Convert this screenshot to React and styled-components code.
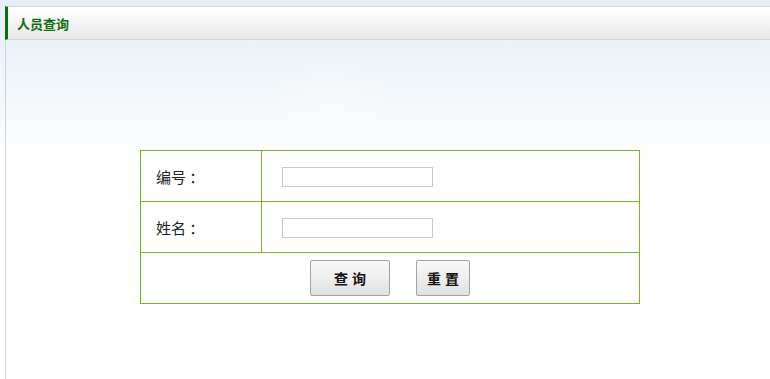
import React from 'react';
import styled, { createGlobalStyle } from 'styled-components';

const GlobalStyle = createGlobalStyle`
    html, body {
        margin: 0;
        padding: 0;
        background: #fff;
        font-family: "Liberation Sans", "Noto Sans CJK SC", sans-serif;
    }
`;

const Page = styled.div`
    width: 770px;
    height: 379px;
    box-sizing: border-box;
    padding: 6px 0 0 5px;
    background:
        radial-gradient(ellipse 70px 50px at 330px 100px, rgba(255, 255, 255, 0.35), transparent),
        linear-gradient(180deg, #e4eff8 0px, #edf4fa 60px, #f5f9fc 110px, #ffffff 160px);
    overflow: hidden;
`;

const Frame = styled.div`
    height: 100%;
    border-left: 1px solid #d2d2d2;
`;

const TitleBar = styled.div`
    height: 32px;
    display: flex;
    align-items: center;
    border-top: 1px solid #d6d6d6;
    border-bottom: 1px solid #d6d6d6;
    border-left: 3px solid #0b6e0b;
    margin-left: -1px;
    padding-left: 9px;
    background: linear-gradient(180deg, #ffffff 0%, #f4f4f4 50%, #e6e6e6 100%);

    h1 {
        margin: 0;
        font-size: 13px;
        font-weight: bold;
        color: #0b6e0b;
        font-family: "Noto Sans CJK SC", sans-serif;
    }
`;

const Form = styled.table`
    width: 500px;
    margin: 110px 0 0 134px;
    border-collapse: collapse;
    background: #fff;

    td {
        border: 1px solid #7ab51d;
        height: 50px;
        padding: 0;
        font-family: "Noto Sans CJK SC", sans-serif;
        font-size: 15px;
        color: #222;
    }
`;

const Label = styled.td`
    width: 105px;
    padding-left: 15px !important;
`;

const Field = styled.td`
    padding-left: 20px !important;
`;

const Input = styled.input`
    box-sizing: border-box;
    width: 151px;
    height: 20px;
    border: 1px solid #c8c8c8;
    outline: none;
    padding: 0 3px;
    vertical-align: middle;
`;

const Actions = styled.div`
    display: flex;
    justify-content: center;
    gap: 26px;
`;

const Button = styled.button`
    width: ${(p) => p.$w}px;
    height: 36px;
    border: 1px solid #a3a3a3;
    border-radius: 2px;
    background: linear-gradient(180deg, #f8f8f8 0%, #ececec 60%, #e0e0e0 100%);
    font-family: "Noto Sans CJK SC", sans-serif;
    font-size: 14px;
    font-weight: bold;
    color: #111;
    letter-spacing: 4px;
    padding: 0 0 0 4px;
    cursor: pointer;
`;

export default function App() {
    return (
        <>
            <GlobalStyle />
            <Page>
                <Frame>
                    <TitleBar>
                        <h1>人员查询</h1>
                    </TitleBar>
                    <Form>
                        <tbody>
                            <tr>
                                <Label>编号 ：</Label>
                                <Field>
                                    <Input type="text" />
                                </Field>
                            </tr>
                            <tr>
                                <Label>姓名 ：</Label>
                                <Field>
                                    <Input type="text" />
                                </Field>
                            </tr>
                            <tr>
                                <td colSpan={2}>
                                    <Actions>
                                        <Button $w={80}>查询</Button>
                                        <Button $w={54}>重置</Button>
                                    </Actions>
                                </td>
                            </tr>
                        </tbody>
                    </Form>
                </Frame>
            </Page>
        </>
    );
}
